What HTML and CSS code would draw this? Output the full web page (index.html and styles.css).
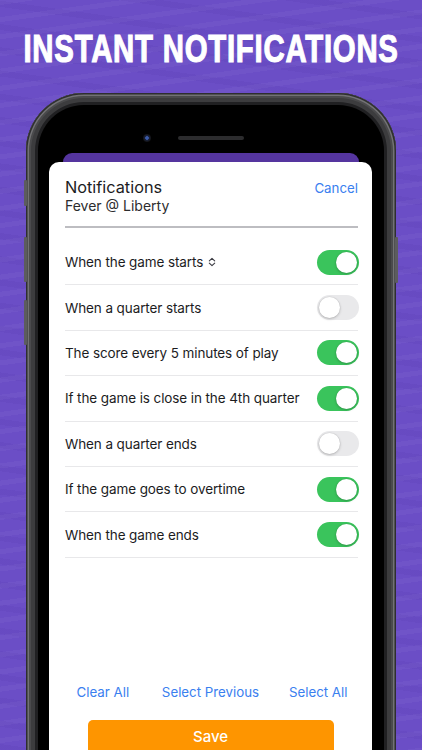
FILE: index.html
```html
<!DOCTYPE html>
<html lang="en">
<head>
<meta charset="utf-8">
<title>Instant Notifications</title>
<link rel="stylesheet" href="styles.css">
</head>
<body>
<div class="page">
  <h1 class="title"><span class="title-text">INSTANT NOTIFICATIONS</span></h1>
  <div class="phone">
    <span class="side-btn mute"></span>
    <span class="side-btn vol-up"></span>
    <span class="side-btn vol-down"></span>
    <span class="side-btn power"></span>
    <div class="screen">
      <div class="sensors">
        <span class="camera"></span>
        <span class="speaker"></span>
        <span class="sensor-spacer"></span>
      </div>
      <div class="back-sheet"></div>
      <div class="card">
        <div class="card-head">
          <div class="head-row">
            <span class="head-title">Notifications</span>
            <span class="link cancel">Cancel</span>
          </div>
          <div class="head-sub">Fever @ Liberty</div>
        </div>
        <div class="divider"></div>
        <ul class="rows">
          <li class="row">
            <span class="label">When the game starts
              <svg class="updown" viewBox="0 0 8 10" width="8" height="10"><path d="M1.3 3.9 L4 1.3 L6.7 3.9 M1.3 6.1 L4 8.7 L6.7 6.1" fill="none" stroke="#3c3c43" stroke-width="1.1" stroke-linecap="round" stroke-linejoin="round"/></svg>
            </span>
            <span class="toggle on"><span class="knob"></span></span>
          </li>
          <li class="row">
            <span class="label">When a quarter starts</span>
            <span class="toggle"><span class="knob"></span></span>
          </li>
          <li class="row">
            <span class="label">The score every 5 minutes of play</span>
            <span class="toggle on"><span class="knob"></span></span>
          </li>
          <li class="row">
            <span class="label">If the game is close in the 4th quarter</span>
            <span class="toggle on"><span class="knob"></span></span>
          </li>
          <li class="row">
            <span class="label">When a quarter ends</span>
            <span class="toggle"><span class="knob"></span></span>
          </li>
          <li class="row">
            <span class="label">If the game goes to overtime</span>
            <span class="toggle on"><span class="knob"></span></span>
          </li>
          <li class="row">
            <span class="label">When the game ends</span>
            <span class="toggle on"><span class="knob"></span></span>
          </li>
        </ul>
        <div class="actions">
          <span class="link">Clear All</span>
          <span class="link">Select Previous</span>
          <span class="link">Select All</span>
        </div>
        <div class="save-wrap"><span class="save">Save</span></div>
      </div>
    </div>
  </div>
</div>
</body>
</html>
```

FILE: styles.css
```css
html, body {
  margin: 0;
  padding: 0;
}
body {
  width: 422px;
  height: 750px;
  overflow: hidden;
  background-color: #6b4ec6;
  background-image:
    repeating-linear-gradient(172deg, rgba(255,255,255,0.035) 0 5px, rgba(255,255,255,0) 5px 17px),
    repeating-linear-gradient(8deg, rgba(40,10,120,0.05) 0 6px, rgba(0,0,0,0) 6px 23px);
  font-family: Inter, "Liberation Sans", sans-serif;
}
.page {
  display: flex;
  flex-direction: column;
  align-items: center;
}
.title {
  margin: 30px 0 0;
  height: 38px;
  width: 100%;
  display: flex;
  justify-content: center;
  font-family: "Liberation Sans", Arial, sans-serif;
  font-weight: 700;
  font-size: 38px;
  line-height: 38px;
  color: #ffffff;
  white-space: nowrap;
}
.title-text {
  display: block;
  flex: none;
  letter-spacing: 1px;
  transform: scaleX(0.772);
  transform-origin: center;
  -webkit-text-stroke: 1.1px #ffffff;
}
.phone {
  position: relative;
  margin-top: 25px;
  width: 370px;
  height: 700px;
  box-sizing: border-box;
  padding: 12px;
  border-radius: 58px 58px 0 0;
  background: #1a1a1a;
  box-shadow:
    inset 0 0 0 1.5px #2e2e30,
    inset 0 0 0 3px #727274,
    inset 0 0 0 5px #4a4a4c,
    inset 0 0 0 9px #3c3c3e,
    inset 0 0 0 12px #202022;
}
.side-btn {
  position: absolute;
  width: 3px;
  background: #5c5c5e;
  border-radius: 1px;
}
.mute { left: -2px; top: 87px; height: 26px; }
.vol-up { left: -2px; top: 144px; height: 45px; }
.vol-down { left: -2px; top: 207px; height: 45px; }
.power { right: -2px; top: 144px; height: 46px; }
.screen {
  height: 100%;
  background: #000;
  border-radius: 46px 46px 0 0;
  overflow: hidden;
}
.sensors {
  margin-top: 29px;
  height: 8px;
  display: flex;
  justify-content: center;
  align-items: center;
  gap: 27px;
}
.camera {
  width: 8px;
  height: 8px;
  border-radius: 50%;
  background: radial-gradient(circle, #3b5aa8 0 1.5px, #1a2340 2px, #111 4px);
}
.speaker {
  width: 66px;
  height: 4px;
  border-radius: 2px;
  background: #2c2c2e;
}
.sensor-spacer {
  width: 8px;
  height: 8px;
}
.back-sheet {
  margin: 11px 25px 0;
  height: 9px;
  border-radius: 9px 9px 0 0;
  background: #55359f;
}
.card {
  margin: 0 12px 0 11px;
  height: 600px;
  background: #ffffff;
  border-radius: 10px 10px 0 0;
  color: #1c1c1e;
}
.card-head {
  padding: 15px 14px 0 16px;
}
.head-row {
  display: flex;
  justify-content: space-between;
  align-items: baseline;
  height: 20px;
}
.head-title {
  font-size: 16.3px;
  line-height: 20px;
  font-weight: 400;
}
.link {
  color: #3a80ef;
  font-size: 13.3px;
  line-height: 20px;
}
.head-sub {
  font-size: 14px;
  line-height: 18px;
  color: #2c2c2e;
}
.divider {
  margin: 11px 14px 0 16px;
  height: 2px;
  background: #bdbdc1;
}
.rows {
  list-style: none;
  margin: 12px 14px 0 16px;
  padding: 0;
}
.row {
  height: 44.4px;
  display: flex;
  align-items: center;
  justify-content: space-between;
  border-bottom: 1px solid #e8e8ea;
}
.label {
  font-size: 13.5px;
  letter-spacing: -0.1px;
  line-height: 20px;
  display: flex;
  align-items: center;
  gap: 5px;
}
.updown {
  display: block;
}
.toggle {
  position: relative;
  width: 42px;
  height: 25px;
  border-radius: 13px;
  background: #e9e9eb;
  flex: none;
  margin-right: -1px;
}
.toggle.on {
  background: #3ac45c;
}
.knob {
  position: absolute;
  top: 2px;
  left: 2px;
  width: 21px;
  height: 21px;
  border-radius: 50%;
  background: #ffffff;
  box-shadow: 0 1px 3px rgba(0,0,0,0.22), 0 0 0 0.5px rgba(0,0,0,0.06);
}
.toggle.on .knob {
  left: 19px;
}
.actions {
  margin-top: 124.7px;
  display: grid;
  grid-template-columns: 1fr 1fr 1fr;
  justify-items: center;
}
.save-wrap {
  margin-top: 17.3px;
  display: flex;
  justify-content: center;
}
.save {
  display: flex;
  align-items: center;
  justify-content: center;
  width: 246px;
  height: 34px;
  border-radius: 5px;
  background: #fe9500;
  color: #ffffff;
  font-size: 15px;
  font-weight: 500;
}
```
